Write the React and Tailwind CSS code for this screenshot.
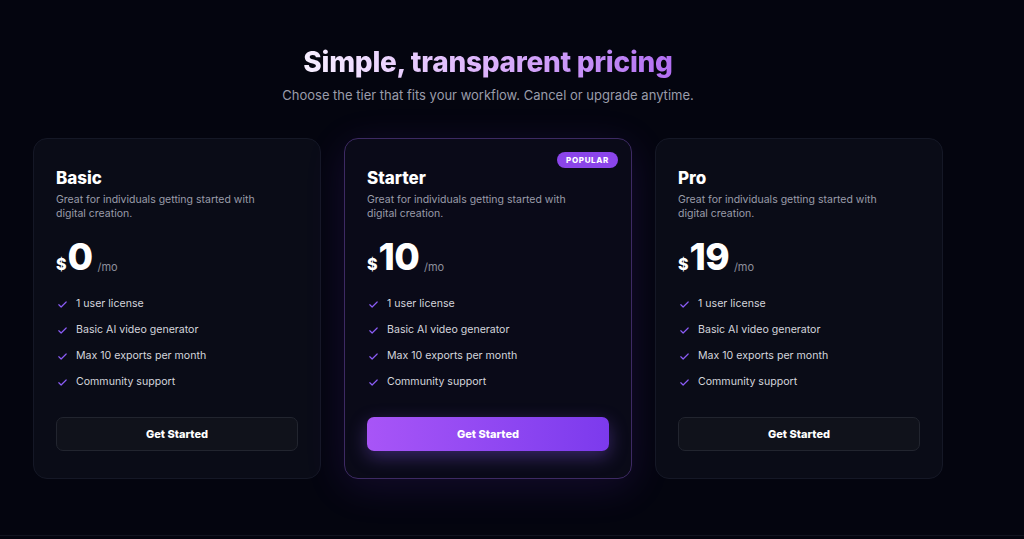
import React from 'react'

const features = ['1 user license', 'Basic AI video generator', 'Max 10 exports per month', 'Community support']

const tiers = [
    { name: 'Basic', price: '0' },
    { name: 'Starter', price: '10', popular: true },
    { name: 'Pro', price: '19' },
]

const Check = () => (
    <svg width="11" height="11" viewBox="0 0 24 24" fill="none" stroke="#8b5cf6" strokeWidth="2.5" strokeLinecap="round" strokeLinejoin="round">
        <path d="M4 12.5l5 5L20 6.5" />
    </svg>
)

const TierCard = ({ tier }) => (
    <div
        className={`relative w-[288px] rounded-[14px] border px-[22px] pt-[28px] pb-[27px] ${tier.popular
            ? 'border-[#3d2a63] bg-[#0a0a18] shadow-[0_8px_40px_rgba(124,58,237,0.14)]'
            : 'border-[#151826] bg-[#0a0c17]'
            }`}
    >
        {tier.popular && (
            <span className="absolute right-[13px] top-[13px] rounded-full bg-[#8b45ea] px-[9px] py-[3px] text-[8px] font-extrabold leading-[10px] tracking-[0.08em] text-white">
                POPULAR
            </span>
        )}
        <h3 className="text-[17px] font-extrabold leading-[22px] text-white">{tier.name}</h3>
        <p className="mt-[4px] w-[215px] text-[10.5px] leading-[14px] text-[#9a9caa]">
            Great for individuals getting started with digital creation.
        </p>
        <div className="mt-[18px] flex items-end">
            <span className="mb-[3px] text-[16px] font-extrabold leading-none text-white">$</span>
            <span className="ml-[1px] text-[37px] font-extrabold leading-[36px] tracking-[-0.02em] text-white">{tier.price}</span>
            <span className="mb-[2px] ml-[5px] text-[11px] leading-none text-[#8d8f9c]">/mo</span>
        </div>
        <ul className="mt-[22px] flex flex-col gap-[12px]">
            {features.map((f) => (
                <li key={f} className="flex items-center gap-[8px] pl-[1px] text-[10.6px] leading-[14px] text-[#d4d5dc]">
                    <Check />
                    <span>{f}</span>
                </li>
            ))}
        </ul>
        <button
            className={`mt-[28px] h-[34px] w-full rounded-[7px] text-[11px] font-extrabold text-white ${tier.popular
                ? 'bg-gradient-to-r from-[#a855f7] to-[#7c3aed] shadow-[0_6px_18px_rgba(139,92,246,0.35)]'
                : 'border border-[#22252f] bg-[#10121b]'
                }`}
        >
            Get Started
        </button>
    </div>
)

export default function App() {
    return (
        <div
            className="flex min-h-[539px] flex-col bg-[#04050f]"
            style={{ fontFamily: 'Inter, "Noto Sans", sans-serif' }}
        >
            <div className="ml-[33px] w-[910px] pt-[44px]">
                <h1 className="text-center text-[28px] font-extrabold leading-[36px] tracking-[-0.01em]">
                    <span className="bg-gradient-to-r from-[#f7efff] via-[#dcb2fb] to-[#b26ef2] bg-clip-text text-transparent">
                        Simple, transparent pricing
                    </span>
                </h1>
                <p className="mt-[6px] text-center text-[13px] leading-[18px] text-[#9a9caa]">
                    Choose the tier that fits your workflow. Cancel or upgrade anytime.
                </p>
                <div className="mt-[34px] flex gap-[23px]">
                    {tiers.map((t) => (
                        <TierCard key={t.name} tier={t} />
                    ))}
                </div>
            </div>
            <div className="mt-auto h-[4px] border-t border-[#11141f]" />
        </div>
    )
}
